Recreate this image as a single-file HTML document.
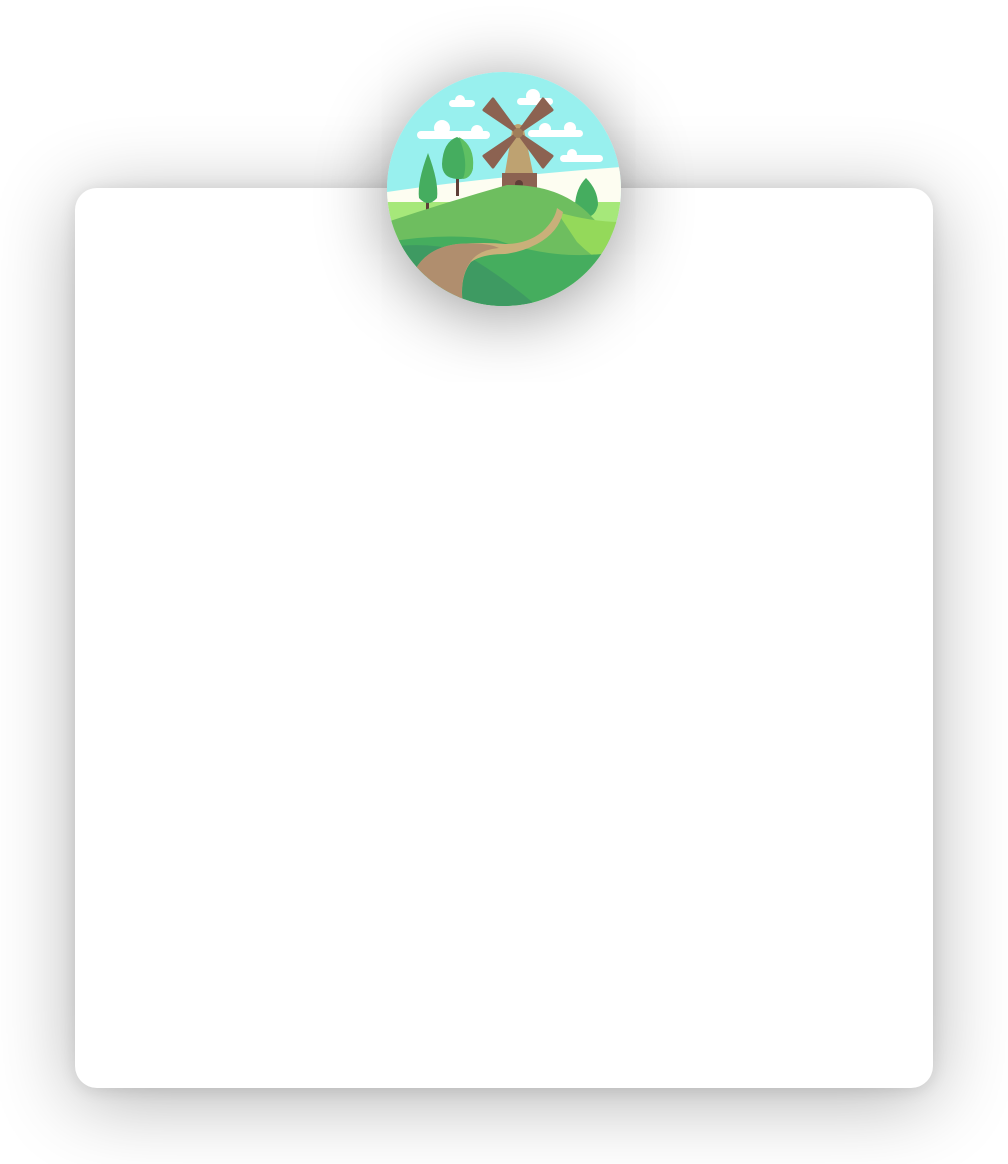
<!DOCTYPE html>
<html><head><meta charset="utf-8">
<style>
html,body{margin:0;padding:0;background:#fff;width:1008px;height:1164px;overflow:hidden;position:relative}
.card{position:absolute;left:75px;top:188px;width:858px;height:900px;background:#fff;border-radius:22px;box-shadow:0 12px 80px rgba(0,0,0,0.3),0 2px 16px rgba(0,0,0,0.1)}
.circ{position:absolute;left:387px;top:72px;width:234px;height:234px;border-radius:50%;overflow:hidden;box-shadow:0 8px 70px rgba(0,0,0,0.42)}
</style></head><body>
<div class="card"></div>
<div class="circ">
<svg width="234" height="234" viewBox="0 0 234 234">
<rect width="234" height="234" fill="#98f0ee"/>
<g fill="#fff">
<rect x="62" y="28" width="26" height="7" rx="3.5"/><circle cx="73" cy="28" r="5"/>
<rect x="130" y="26" width="36" height="7" rx="3.5"/><circle cx="146" cy="24" r="7"/>
<rect x="30" y="59" width="73" height="8" rx="4"/><circle cx="55" cy="56" r="8"/><circle cx="90" cy="59" r="6"/>
<rect x="141" y="58" width="55" height="7" rx="3.5"/><circle cx="158" cy="57" r="6"/><circle cx="183" cy="56" r="6"/>
<rect x="173" y="83" width="43" height="7" rx="3.5"/><circle cx="185" cy="82" r="5"/>
</g>
<path d="M0 120 Q100 105 234 95 L234 140 L0 140Z" fill="#fdfdf1"/>
<rect x="0" y="130" width="234" height="110" fill="#a6e87a"/>
<!-- windmill -->
<path d="M126 53 L136 53 L146 101 L118 101Z" fill="#bea271"/>
<circle cx="131" cy="57" r="5" fill="#bea271"/>
<rect x="115" y="101" width="35" height="22" fill="#8c6251"/>
<circle cx="132" cy="112" r="4" fill="#5e3f37"/>
<g fill="#8c6251" stroke="#8c6251" stroke-width="3" stroke-linejoin="round">
<path d="M131 61 L97 38 L106 27 Z"/>
<path d="M131 61 L156 27 L165 38 Z"/>
<path d="M131 61 L97 84 L106 95 Z"/>
<path d="M131 61 L165 84 L156 95 Z"/>
</g>
<circle cx="131" cy="61" r="5" fill="#a07e5a"/>
<!-- trees -->
<rect x="39" y="115" width="3" height="26" fill="#5e3f37"/>
<path d="M41 81 Q52 110 50 126 Q41 136 32 126 Q30 110 41 81Z" fill="#45ad5f"/>
<rect x="69" y="90" width="3" height="34" fill="#5e3f37"/>
<path d="M70 65 Q87 72 86 96 Q84 108 70 107 Q55 106 55 92 Q56 70 70 65Z" fill="#45ad5f"/>
<path d="M72 65 Q88 74 86 96 Q84 106 76 107 Q82 90 72 65Z" fill="#5fc063"/>
<rect x="197" y="130" width="3" height="22" fill="#5e3f37"/>
<path d="M199 106 Q211 118 211 133 Q208 145 199 145 Q188 145 188 133 Q189 116 199 106Z" fill="#45ad5f"/>
<!-- hills -->
<path d="M0 150 Q60 130 120 113 Q170 112 200 140 Q220 160 234 178 L234 234 L0 234Z" fill="#6ebe5f"/>
<path d="M170 140 Q205 150 234 150 L234 200 Q210 190 190 170Z" fill="#94d95a"/>
<path d="M0 170 Q60 160 110 168 Q170 190 230 180 L234 234 L0 234Z" fill="#45ad5e"/>
<path d="M0 175 Q40 170 70 178 Q110 200 150 234 L0 234Z" fill="#3e9a62"/>
<!-- path -->
<path d="M170 136 L176 140 Q172 160 150 172 Q135 180 118 182 Q95 182 84 190 Q72 205 76 234 L40 234 Q28 212 28 198 Q40 176 70 172 Q100 170 118 172 Q140 172 155 160 Q168 148 170 136Z" fill="#c9b07a"/>
<path d="M28 198 Q40 176 70 172 Q100 170 112 176 Q90 178 82 192 Q72 208 76 234 L40 234 Q28 212 28 198Z" fill="#b08e6e"/>
</svg>
</div>
</body></html>
